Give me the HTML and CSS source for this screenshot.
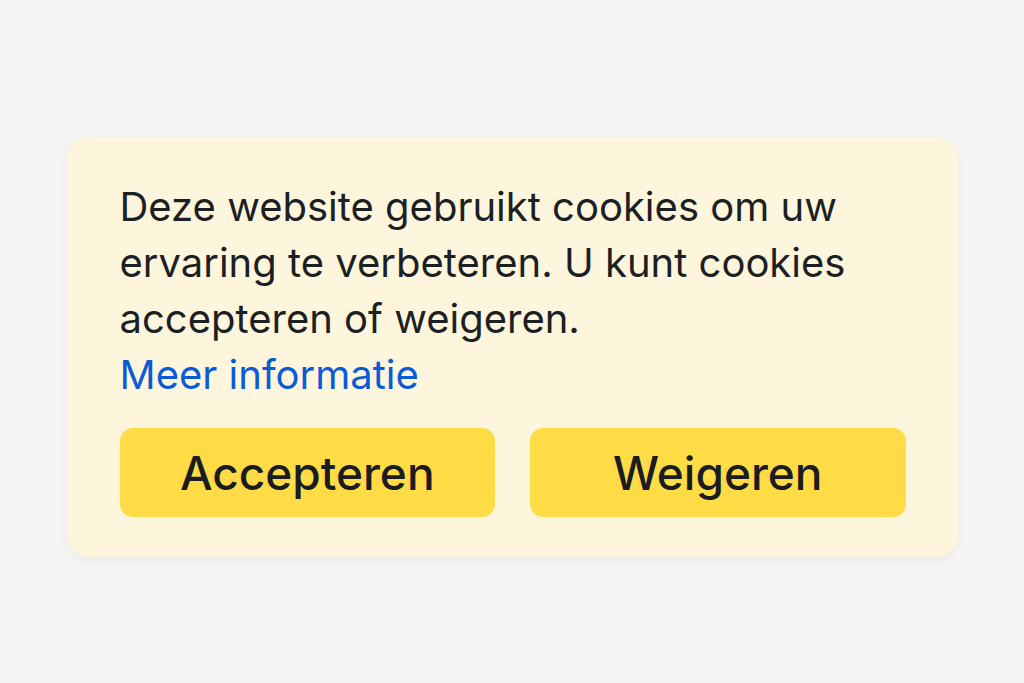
FILE: index.html
```html
<!DOCTYPE html>
<html lang="nl">
<head>
    <meta charset="UTF-8">
    <meta name="viewport" content="width=device-width, initial-scale=1.0">
    <title>Cookies</title>
    <link rel="stylesheet" href="styles.css">
</head>
<body>
    <!-- cookie melding -->
    <div class="cookie-banner">
        <p class="cookie-text">
            Deze website gebruikt cookies om uw ervaring te verbeteren. U kunt cookies accepteren of weigeren.
            <a href="#" class="more-link">Meer informatie</a>
        </p>
        <div class="cookie-actions">
            <button class="cookie-btn">Accepteren</button>
            <button class="cookie-btn">Weigeren</button>
        </div>
    </div>
</body>
</html>
```

FILE: styles.css
```css
body {
    margin: 0;
    height: 683px;
    background: #f6f5f3;
    font-family: Inter, "Noto Sans", sans-serif;
    display: flex;
    justify-content: center;
    align-items: flex-start;
}

.cookie-banner {
    margin-top: 137px;
    width: 891px;
    box-sizing: border-box;
    padding: 42px 52px 40px 53px;
    background: #fef6dc;
    border-radius: 22px;
    box-shadow: 0 4px 14px rgba(0,0,0,0.05);
}

.cookie-text {
    margin: 0;
    font-size: 40px;
    line-height: 56px;
    color: #1c1f23;
}

.more-link {
    display: block;
    color: #0b5bd6;
    text-decoration: none;
}

.cookie-actions {
    display: flex;
    gap: 35px;
    margin-top: 25px;
}

.cookie-btn {
    flex: 1;
    height: 89px;
    border: none;
    border-radius: 13px;
    background: #ffdc45;
    color: #1a1c1f;
    font-family: inherit;
    font-size: 46px;
    font-weight: 500;
    cursor: pointer;
}
```
